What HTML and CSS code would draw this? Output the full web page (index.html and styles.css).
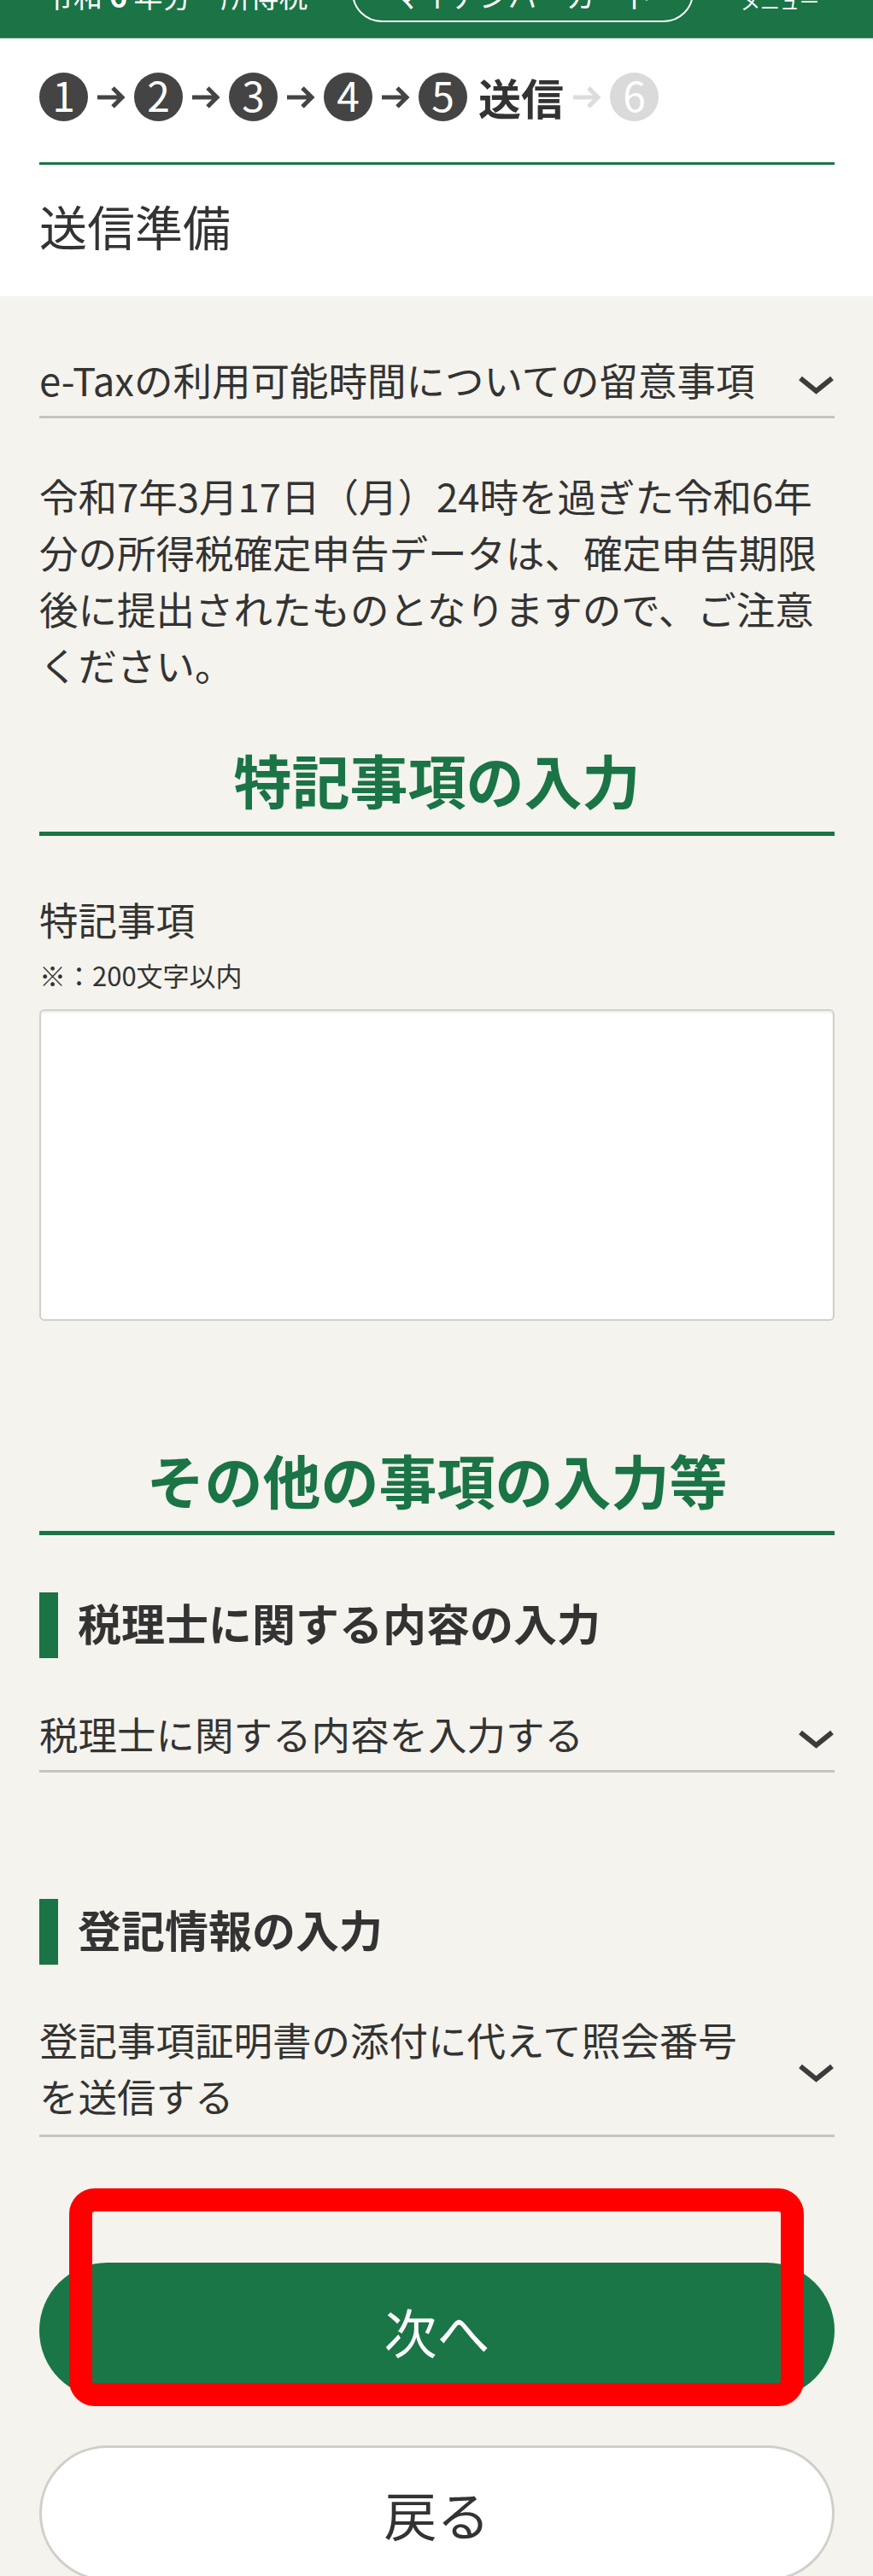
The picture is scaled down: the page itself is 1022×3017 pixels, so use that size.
FILE: index.html
```html
<!DOCTYPE html>
<html lang="ja">

<head>
	<meta charset="utf-8">
	<title>送信準備</title>
	<link rel="stylesheet" href="styles.css">
</head>

<body>

	<header class="site-header">
		<div class="site-header-inner">
			<div class="site-title">令和 <b>6</b> 年分　所得税</div>
			<a class="card-button">マイナンバーカード</a>
			<div class="menu-label">メニュー</div>
		</div>
	</header>

	<section class="intro">
		<div class="steps">
			<span class="step-num">1</span>
			<svg class="step-arrow" width="34" height="30" viewBox="0 0 34 30"><path d="M1 15 H30 M19 4 L30 15 L19 26" /></svg>
			<span class="step-num">2</span>
			<svg class="step-arrow" width="34" height="30" viewBox="0 0 34 30"><path d="M1 15 H30 M19 4 L30 15 L19 26" /></svg>
			<span class="step-num">3</span>
			<svg class="step-arrow" width="34" height="30" viewBox="0 0 34 30"><path d="M1 15 H30 M19 4 L30 15 L19 26" /></svg>
			<span class="step-num">4</span>
			<svg class="step-arrow" width="34" height="30" viewBox="0 0 34 30"><path d="M1 15 H30 M19 4 L30 15 L19 26" /></svg>
			<span class="step-num">5</span>
			<span class="step-label">送信</span>
			<svg class="step-arrow is-off" width="34" height="30" viewBox="0 0 34 30"><path d="M1 15 H30 M19 4 L30 15 L19 26" /></svg>
			<span class="step-num is-off">6</span>
		</div>
		<div class="intro-rule"></div>
		<h1 class="page-title">送信準備</h1>
	</section>

	<main class="content">

		<div class="accordion acc-first">
			<span class="accordion-text">e-Taxの利用可能時間についての留意事項</span>
			<svg class="chevron" width="43" height="22" viewBox="0 0 43 22"><polyline points="3,3 21.5,18 40,3" /></svg>
		</div>

		<p class="notice">令和7年3月17日（月）24時を過ぎた令和6年分の所得税確定申告データは、確定申告期限後に提出されたものとなりますので、ご注意ください。</p>

		<h2 class="section-title title-first">特記事項の入力</h2>

		<label class="field-label" for="tokki">特記事項</label>
		<div class="field-note">※：200文字以内</div>
		<textarea id="tokki" class="field-text"></textarea>

		<h2 class="section-title title-second">その他の事項の入力等</h2>

		<h3 class="sub-title sub-first">税理士に関する内容の入力</h3>
		<div class="accordion acc-second">
			<span class="accordion-text">税理士に関する内容を入力する</span>
			<svg class="chevron" width="43" height="22" viewBox="0 0 43 22"><polyline points="3,3 21.5,18 40,3" /></svg>
		</div>

		<h3 class="sub-title sub-second">登記情報の入力</h3>
		<div class="accordion acc-third">
			<span class="accordion-text">登記事項証明書の添付に代えて照会番号を送信する</span>
			<svg class="chevron" width="43" height="22" viewBox="0 0 43 22"><polyline points="3,3 21.5,18 40,3" /></svg>
		</div>

		<div class="button-wrap">
			<button class="btn btn-next">次へ</button>
			<div class="mark-box"></div>
		</div>
		<button class="btn btn-back">戻る</button>

	</main>

</body>

</html>
```

FILE: styles.css
```css
body {
	margin: 0;
	font-family: "Noto Sans CJK JP", "Noto Sans", sans-serif;
	background-color: #f5f3ed;
	color: #333;
}

/* top bar, scrolled partly out of view */
.site-header {
	height: 45px;
	overflow: hidden;
	background: #1a7445;
	border-bottom: 1px solid #4b9069;
	box-sizing: border-box;
}

.site-header-inner {
	display: flex;
	align-items: flex-end;
	height: 70px;
	margin-top: -44px;
	padding-left: 52px;
	color: #fff;
}

.site-title {
	width: 360px;
	font-size: 34px;
	line-height: 34px;
	margin-bottom: 14px;
	white-space: nowrap;
}

.site-title b {
	font-size: 36px;
}

.card-button {
	display: flex;
	align-items: flex-end;
	justify-content: center;
	width: 400px;
	height: 70px;
	padding-bottom: 12px;
	border: 2px solid #fff;
	border-radius: 35px;
	box-sizing: border-box;
	font-size: 34px;
	line-height: 34px;
}

.menu-label {
	margin-left: 55px;
	margin-bottom: 13px;
	font-size: 23px;
	line-height: 23px;
}

/* white block with steps and title */
.intro {
	background: #fff;
	padding: 40px 45px 41px 46px;
}

.steps {
	display: flex;
	align-items: center;
	gap: 10px;
	height: 57px;
}

.step-num {
	width: 57px;
	height: 57px;
	border-radius: 50%;
	background: #444;
	color: #fff;
	font-size: 48px;
	line-height: 50px;
	text-align: center;
}

.step-num.is-off {
	background: #dadada;
}

.step-arrow path {
	fill: none;
	stroke: #444;
	stroke-width: 5;
}

.step-arrow.is-off path {
	stroke: #dcdcdc;
}

.step-label {
	margin-left: 3px;
	font-size: 50px;
	font-weight: 700;
	line-height: 57px;
}

.intro-rule {
	height: 3px;
	margin-top: 48px;
	background: #1a7445;
}

.page-title {
	margin: 29px 0 0;
	font-size: 56px;
	font-weight: 400;
	line-height: 84px;
}

/* main content */
.content {
	padding: 0 45px 40px 46px;
}

.accordion {
	display: flex;
	justify-content: space-between;
	align-items: center;
	padding-bottom: 10px;
	border-bottom: 3px solid #c7c4bd;
	font-size: 45.5px;
	line-height: 66px;
}

.accordion-text {
	flex: 1;
}

.chevron {
	flex-shrink: 0;
	margin-left: 30px;
	margin-top: 13px;
}

.chevron polyline {
	fill: none;
	stroke: #3c3c3c;
	stroke-width: 6;
}

.acc-first {
	margin-top: 64px;
}

.acc-second {
	margin-top: 55px;
}

.acc-third {
	margin-top: 54px;
	padding-bottom: 13px;
}

.notice {
	margin: 57px 0 0;
	font-size: 45.5px;
	line-height: 66px;
}

.section-title {
	margin: 0;
	padding-bottom: 17px;
	border-bottom: 5px solid #1a7445;
	color: #1a7445;
	font-size: 68px;
	font-weight: 700;
	line-height: 88px;
	text-align: center;
}

.title-first {
	margin-top: 58px;
}

.title-second {
	margin-top: 142px;
	padding-bottom: 16px;
}

.field-label {
	display: block;
	margin-top: 64px;
	font-size: 45.5px;
	line-height: 66px;
}

.field-note {
	margin-top: 10px;
	font-size: 31px;
	line-height: 45px;
}

.field-text {
	display: block;
	width: 100%;
	height: 365px;
	margin-top: 18px;
	border: 2px solid #d3d0c9;
	border-radius: 6px;
	box-shadow: inset 0 2px 3px rgba(0, 0, 0, .08);
	background: #fff;
	box-sizing: border-box;
	resize: none;
}

.sub-title {
	margin: 0;
	padding-left: 23px;
	padding-bottom: 7px;
	border-left: 22px solid #1a7445;
	font-size: 51px;
	font-weight: 700;
	line-height: 70px;
}

.sub-first {
	margin-top: 67px;
}

.sub-second {
	margin-top: 148px;
}

/* buttons */
.button-wrap {
	position: relative;
	margin-top: 147px;
}

.btn {
	display: block;
	width: 100%;
	height: 159px;
	border-radius: 80px;
	font-family: "Noto Sans CJK JP", "Noto Sans", sans-serif;
	font-size: 62px;
	cursor: pointer;
}

.btn-next {
	border: 0;
	background: #1a7646;
	color: #fff;
}

.btn-back {
	margin-top: 55px;
	border: 3px solid #d2cfc8;
	background: #fff;
	color: #333;
}

/* red highlight drawn over the next button */
.mark-box {
	position: absolute;
	top: -87px;
	left: 35px;
	width: 860px;
	height: 255px;
	border: 27px solid #ff0000;
	border-radius: 30px;
	box-sizing: border-box;
}
```
